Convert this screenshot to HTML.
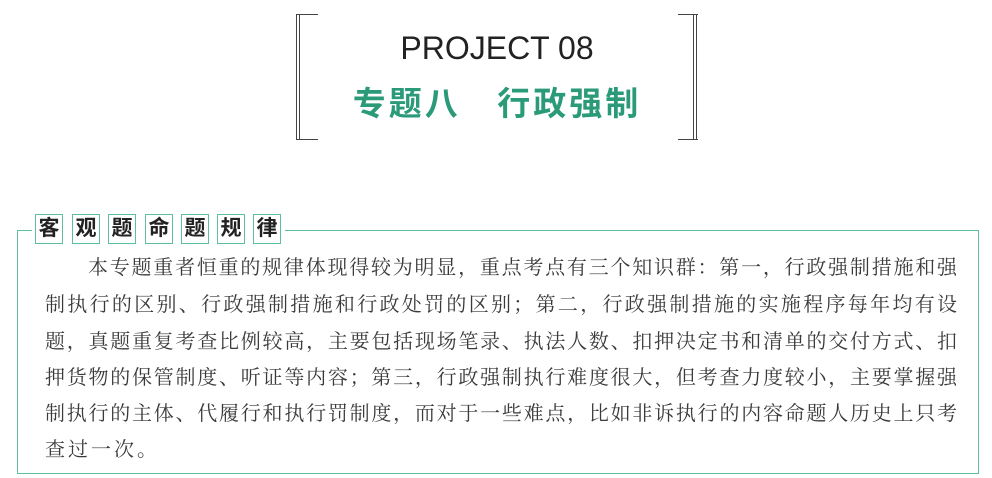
<!DOCTYPE html>
<html><head><meta charset="utf-8"><style>
body{margin:0;width:992px;height:478px;background:#fff;position:relative;overflow:hidden;font-family:"Liberation Serif","Noto Serif CJK SC",serif;}
.a{position:absolute}
.ln{position:absolute;left:45px;width:912px;font-size:20px;color:#3a3a3a;text-align:justify;text-align-last:justify;height:37px;line-height:37px;white-space:nowrap;overflow:visible}
.bx{position:absolute;top:214px;width:26px;height:28px;border:1px solid #5cc0a0;font-family:"Liberation Sans","Noto Sans CJK SC",sans-serif;font-size:21px;font-weight:bold;color:#222;text-align:center;line-height:28px}
</style></head><body>
<div class="a" style="left:296px;top:14px;width:2px;height:126px;border-left:1px solid #444;border-right:1px solid #444;"></div>
<div class="a" style="left:296px;top:14px;width:22px;height:1px;background:#444"></div>
<div class="a" style="left:296px;top:139px;width:22px;height:1px;background:#444"></div>
<div class="a" style="left:693px;top:14px;width:2px;height:126px;border-left:1px solid #444;border-right:1px solid #444;"></div>
<div class="a" style="left:678px;top:14px;width:20px;height:1px;background:#444"></div>
<div class="a" style="left:678px;top:139px;width:20px;height:1px;background:#444"></div>
<div class="a" style="left:300px;top:28px;width:394px;text-align:center;font-family:'Liberation Sans',sans-serif;font-size:32px;color:#222;line-height:40px">PROJECT 08</div>
<div class="a" style="left:300px;top:82px;width:394px;text-align:center;font-family:'Liberation Sans','Noto Sans CJK SC',sans-serif;font-weight:bold;font-size:33px;color:#2a9a78;line-height:44px;letter-spacing:3px">专题八&nbsp;&nbsp;&nbsp;行政强制</div>
<div class="a" style="left:17px;top:230px;width:15px;height:1px;background:#5cc0a0"></div>
<div class="a" style="left:285px;top:230px;width:694px;height:1px;background:#5cc0a0"></div>
<div class="a" style="left:17px;top:230px;width:1px;height:244px;background:#5cc0a0"></div>
<div class="a" style="left:978px;top:230px;width:1px;height:244px;background:#5cc0a0"></div>
<div class="a" style="left:17px;top:473px;width:962px;height:1px;background:#5cc0a0"></div>
<div class="bx" style="left:35px">客</div>
<div class="bx" style="left:72px">观</div>
<div class="bx" style="left:108px">题</div>
<div class="bx" style="left:145px">命</div>
<div class="bx" style="left:181px">题</div>
<div class="bx" style="left:217px">规</div>
<div class="bx" style="left:253px">律</div>
<div class="ln" style="top:250px;left:88px;width:869px">本专题重者恒重的规律体现得较为明显，重点考点有三个知识群：第一，行政强制措施和强</div>
<div class="ln" style="top:287px">制执行的区别、行政强制措施和行政处罚的区别；第二，行政强制措施的实施程序每年均有设</div>
<div class="ln" style="top:324px">题，真题重复考查比例较高，主要包括现场笔录、执法人数、扣押决定书和清单的交付方式、扣</div>
<div class="ln" style="top:360px">押货物的保管制度、听证等内容；第三，行政强制执行难度很大，但考查力度较小，主要掌握强</div>
<div class="ln" style="top:396px">制执行的主体、代履行和执行罚制度，而对于一些难点，比如非诉执行的内容命题人历史上只考</div>
<div class="ln" style="top:432px;text-align-last:left;letter-spacing:3px">查过一次。</div>
</body></html>
